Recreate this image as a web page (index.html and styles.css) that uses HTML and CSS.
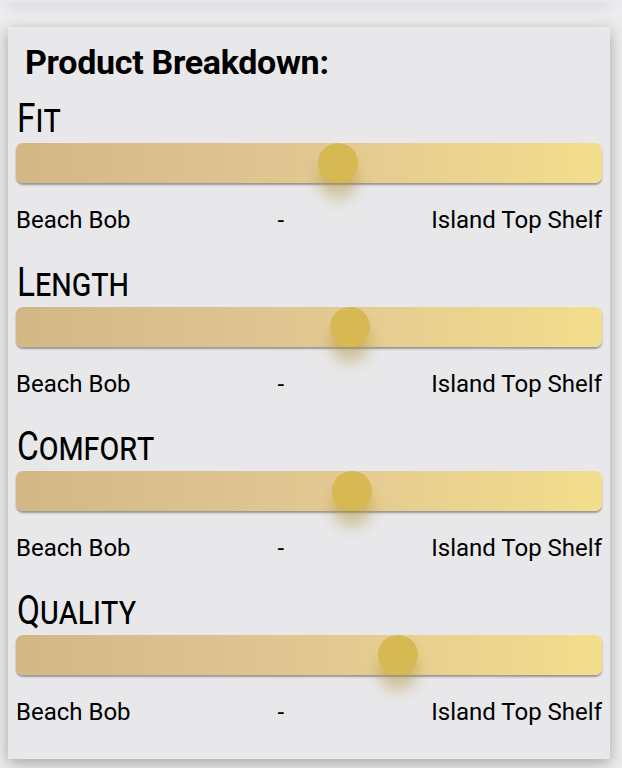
FILE: index.html
```html
<!DOCTYPE html>
<html>
<head>
<meta charset="utf-8">
<link rel="stylesheet" href="styles.css">
</head>
<body>
<div class="prev-card"></div>
<section class="card">
  <h2 class="title">Product Breakdown:</h2>
  <div class="metric">
    <div class="metric-name"><span>Fit</span></div>
    <div class="track"><span class="thumb" style="--v: 0.553"></span></div>
    <div class="scale"><span>Beach Bob</span><span>-</span><span>Island Top Shelf</span></div>
  </div>
  <div class="metric">
    <div class="metric-name"><span>Length</span></div>
    <div class="track"><span class="thumb" style="--v: 0.575"></span></div>
    <div class="scale"><span>Beach Bob</span><span>-</span><span>Island Top Shelf</span></div>
  </div>
  <div class="metric">
    <div class="metric-name"><span>Comfort</span></div>
    <div class="track"><span class="thumb" style="--v: 0.579"></span></div>
    <div class="scale"><span>Beach Bob</span><span>-</span><span>Island Top Shelf</span></div>
  </div>
  <div class="metric">
    <div class="metric-name"><span>Quality</span></div>
    <div class="track"><span class="thumb" style="--v: 0.663"></span></div>
    <div class="scale"><span>Beach Bob</span><span>-</span><span>Island Top Shelf</span></div>
  </div>
</section>
</body>
</html>
```
FILE: styles.css
```css
html, body {
  margin: 0;
  padding: 0;
}
body {
  background: #ececee;
  font-family: Roboto, "Liberation Sans", sans-serif;
  color: #000;
  width: 622px;
  height: 768px;
  overflow: hidden;
}
.prev-card {
  height: 2px;
  margin: 0 12px 0 8px;
  background: #e8e8ea;
  box-shadow: 0 3px 12px rgba(0, 0, 0, 0.32);
}
.card {
  margin: 25px 12px 0 8px;
  padding: 15px 8px 33px 8px;
  background: #e8e8ea;
  box-shadow: 0 4px 14px rgba(0, 0, 0, 0.3);
}
.title {
  margin: 0 0 14px 0;
  padding-left: 9px;
  font-size: 34px;
  line-height: 40px;
  font-weight: 700;
  letter-spacing: -0.3px;
}
.metric {
  margin-bottom: 26px;
}
.metric:last-child {
  margin-bottom: 0;
}
.metric-name {
  font-size: 41px;
  line-height: 44px;
  font-variant: small-caps;
  margin-bottom: 3px;
  margin-left: 1px;
}
.metric-name span {
  display: inline-block;
  transform: scaleX(0.815);
  transform-origin: left center;
}
.track {
  position: relative;
  height: 40px;
  border-radius: 7px;
  background: linear-gradient(to right, #d3b886 0%, #e1c792 50%, #f3de8c 100%);
  box-shadow: 0 2px 2px rgba(0, 0, 0, 0.35);
}
.thumb {
  position: absolute;
  top: 0;
  left: calc(20px + (100% - 40px) * var(--v));
  width: 40px;
  height: 40px;
  margin-left: -20px;
  border-radius: 50%;
  background: #d6b952;
  box-shadow: 0 16px 14px rgba(170, 140, 40, 0.4);
}
.scale {
  margin-top: 23px;
  display: flex;
  justify-content: space-between;
  font-size: 24px;
  line-height: 28px;
}
```
